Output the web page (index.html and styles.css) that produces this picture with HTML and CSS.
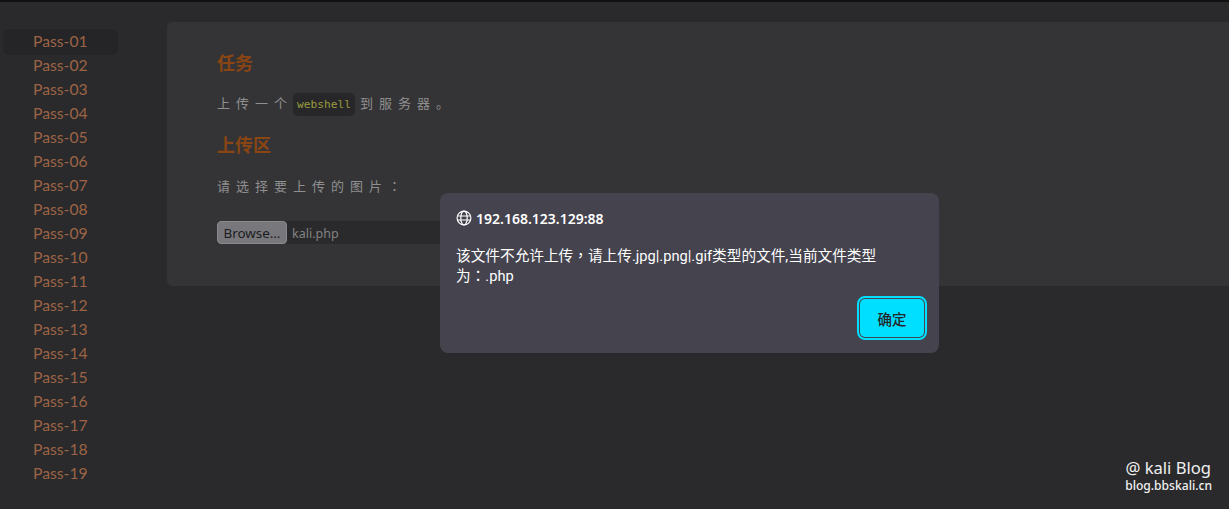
FILE: index.html
```html
<!DOCTYPE html>
<html lang="en">
<head>
  <meta charset="UTF-8">
  <title>Upload Labs</title>
  <link rel="stylesheet" href="styles.css">
</head>
<body>

<div class="page">
  <ul class="menu">
    <li class="active">Pass-01</li>
    <li>Pass-02</li>
    <li>Pass-03</li>
    <li>Pass-04</li>
    <li>Pass-05</li>
    <li>Pass-06</li>
    <li>Pass-07</li>
    <li>Pass-08</li>
    <li>Pass-09</li>
    <li>Pass-10</li>
    <li>Pass-11</li>
    <li>Pass-12</li>
    <li>Pass-13</li>
    <li>Pass-14</li>
    <li>Pass-15</li>
    <li>Pass-16</li>
    <li>Pass-17</li>
    <li>Pass-18</li>
    <li>Pass-19</li>
  </ul>

  <div class="panel">
    <h3>任务</h3>
    <p class="task">上传一个<code>webshell</code>到服务器。</p>
    <h3>上传区</h3>
    <p class="pick">请选择要上传的图片<span class="mark">：</span></p>
    <div class="file-row">
      <button class="browse">Browse…</button>
      <span class="file-name">kali.php</span>
    </div>
  </div>
</div>

<div class="dialog">
  <div class="origin">
    <svg class="globe" width="16" height="16" viewBox="0 0 16 16" fill="none" stroke="#fff" stroke-width="1.2">
      <circle cx="8" cy="8" r="6.9"/>
      <ellipse cx="8" cy="8" rx="3.2" ry="6.9"/>
      <path d="M1.2 6h13.6M1.2 10h13.6"/>
    </svg>
    <span>192.168.123.129:88</span>
  </div>
  <p class="message">该文件不允许上传<span class="mark">，</span>请上传.jpg|.png|.gif类型的文件,当前文件类型为<span class="mark">：</span>.php</p>
  <div class="actions">
    <button class="ok">确定</button>
  </div>
</div>

<div class="watermark">
  <div class="wm-title">@ kali Blog</div>
  <div class="wm-url">blog.bbskali.cn</div>
</div>

</body>
</html>
```

FILE: styles.css
```css
* {
  box-sizing: border-box;
}

html, body {
  height: 100%;
}

body {
  margin: 0;
  overflow: hidden;
  background-color: #2a2a2c;
  border-top: 2px solid #111;
  font-family: Lato, "Noto Sans CJK SC", sans-serif;
}

.page {
  display: flex;
  align-items: flex-start;
  padding: 20px 0 0 3px;
}

.menu {
  width: 115px;
  margin: 7px 49px 0 0;
  padding: 0;
  list-style: none;
}

.menu li {
  height: 24px;
  padding-left: 30px;
  font-size: 15.7px;
  line-height: 24px;
  color: #9c6445;
}

.menu li.active {
  height: 26px;
  margin-bottom: -2px;
  background-color: #252527;
  border-radius: 6px;
  line-height: 24px;
}

.panel {
  flex: 1;
  height: 264px;
  padding: 28px 50px;
  background-color: #343436;
  border-radius: 5px 0 0 5px;
}

h3 {
  margin: 0;
  font-family: "Noto Sans CJK SC", sans-serif;
  font-size: 18px;
  font-weight: 700;
  line-height: 24px;
  color: #8b4513;
}

p {
  margin: 0;
}

.task {
  margin: 17px 0 16px;
  font-family: "Noto Sans CJK SC", sans-serif;
  font-size: 13px;
  letter-spacing: 6px;
  line-height: 24px;
  color: #8f8f8f;
}

.mark {
  font-family: "Noto Sans CJK TC", sans-serif;
  line-height: 1;
  text-spacing-trim: space-all;
}

code {
  display: inline-block;
  margin: 0 5px 0 0;
  padding: 0 4px;
  background-color: #272729;
  border-radius: 5px;
  font-family: "DejaVu Sans Mono", monospace;
  font-size: 11.2px;
  letter-spacing: 0;
  line-height: 23px;
  color: #9a9a3e;
}

.pick {
  margin: 18px 0 23px;
  font-family: "Noto Sans CJK SC", sans-serif;
  font-size: 13px;
  letter-spacing: 6px;
  line-height: 24px;
  color: #8f8f8f;
}

.file-row {
  display: flex;
  align-items: center;
  height: 23px;
  width: 300px;
  background-color: #2a2a2c;
}

.browse {
  width: 70px;
  height: 23px;
  padding: 1px 0 0;
  background-color: #78787c;
  border: 1px solid #8a8a8e;
  border-radius: 4px;
  font-family: "Noto Sans", sans-serif;
  font-size: 13.4px;
  color: #1c1c1e;
}

.file-name {
  margin-left: 5px;
  padding-top: 2px;
  font-family: "Noto Sans", sans-serif;
  font-size: 12.5px;
  color: #828282;
}

.dialog {
  position: absolute;
  left: 440px;
  top: 193px;
  width: 499px;
  height: 160px;
  padding: 16px;
  background-color: #44434e;
  border-radius: 8px;
  font-family: Roboto, "Noto Sans CJK SC", sans-serif;
  color: #fff;
}

.origin {
  display: flex;
  align-items: center;
  gap: 4px;
  height: 18px;
  font-family: "Noto Sans", sans-serif;
  font-size: 14px;
  font-weight: 600;
}

.message {
  width: 430px;
  margin-top: 19px;
  font-size: 14.67px;
  line-height: 20px;
  text-spacing-trim: space-all;
}

.actions {
  display: flex;
  justify-content: flex-end;
  margin-top: 13px;
}

.ok {
  width: 64px;
  height: 38px;
  margin-right: -1px;
  background-color: #00dfff;
  border: none;
  border-radius: 5px;
  outline: 2px solid #00dfff;
  outline-offset: 1px;
  font-family: "Noto Sans CJK SC", sans-serif;
  font-size: 14.5px;
  font-weight: 500;
  color: #26262c;
}

.watermark {
  position: absolute;
  right: 17px;
  top: 458px;
  font-family: "Noto Sans", "Open Sans", sans-serif;
  color: #f0f0f0;
  text-align: right;
}

.wm-title {
  padding-right: 1px;
  font-size: 16.6px;
  line-height: 20px;
}

.wm-url {
  font-size: 12.1px;
  font-weight: 500;
  line-height: 16px;
}
```
